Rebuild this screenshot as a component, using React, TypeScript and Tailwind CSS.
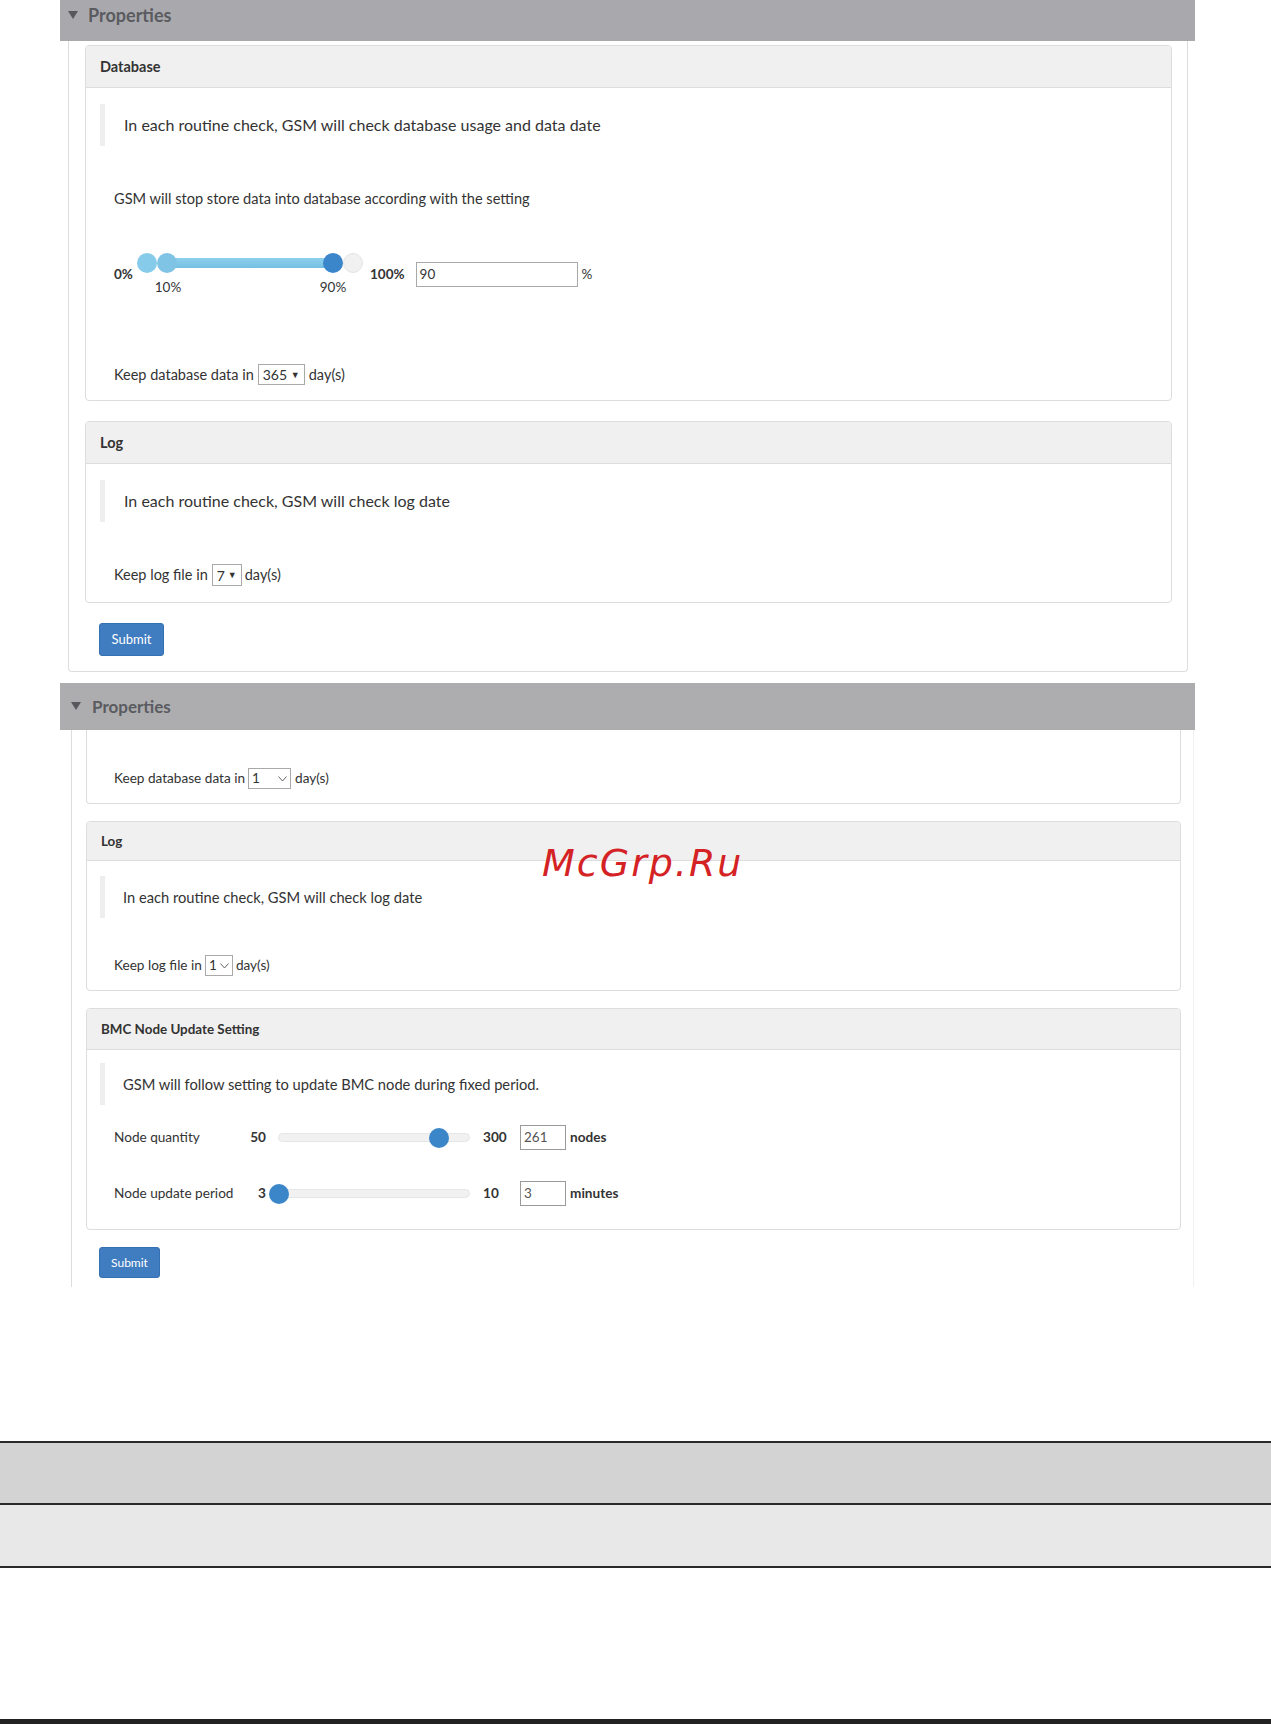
import React from 'react';

function Caret() {
  return (
    <svg width="10" height="9" viewBox="0 0 10 9" className="shrink-0">
      <polygon points="0,0 10,0 5,8" fill="#57585c" />
    </svg>
  );
}

function Chevron() {
  return (
    <svg width="9" height="6" viewBox="0 0 9 6" className="shrink-0">
      <polyline points="0.5,0.5 4.5,5 8.5,0.5" fill="none" stroke="#666" strokeWidth="1" />
    </svg>
  );
}

function PropertiesBar({ tall }: { tall?: boolean }) {
  return (
    <div
      className={
        tall
          ? 'ml-[60px] w-[1135px] h-[47px] bg-[#adadaf] flex items-center pl-[11px] gap-[11px]'
          : 'ml-[60px] w-[1135px] h-[41px] bg-[#a9a9ad] flex items-start pt-[4px] pl-[8px] gap-[10px]'
      }
    >
      <div className={tall ? 'flex items-center' : 'h-[22px] flex items-center'}>
        <Caret />
      </div>
      <span
        className={
          tall
            ? 'text-[17px] leading-[22px] font-bold text-[#5a5b60]'
            : 'text-[18px] leading-[22px] font-bold text-[#5a5b60]'
        }
      >
        Properties
      </span>
    </div>
  );
}

function Quote({ children, small }: { children: React.ReactNode; small?: boolean }) {
  return (
    <div
      className={
        small
          ? 'border-l-[5px] border-[#eeeeee] h-[42px] flex items-center pl-[18px] text-[14.7px] text-[#333]'
          : 'border-l-[5px] border-[#eeeeee] h-[42px] flex items-center pl-[19px] text-[16px] text-[#333]'
      }
    >
      {children}
    </div>
  );
}

function RangeSlider() {
  return (
    <div className="relative w-[226px] h-[25px] ml-[5px]">
      <div className="absolute left-[30px] top-[-4px] w-[166px] h-[10px] bg-gradient-to-b from-[#8ed0ee] to-[#74bfe2]" />
      <div className="absolute left-0 top-[-9px] w-[20px] h-[20px] rounded-full bg-[#86cbea]" />
      <div className="absolute left-[20px] top-[-9px] w-[20px] h-[20px] rounded-full bg-[#7fc4e4]" />
      <div className="absolute left-[186px] top-[-9px] w-[20px] h-[20px] rounded-full bg-[#3b86cb]" />
      <div className="absolute left-[206px] top-[-9px] w-[20px] h-[20px] rounded-full bg-[#f1f1f1] border border-[#e4e4e4]" />
      <span className="absolute left-[31px] top-[17px] -translate-x-1/2 text-[13.5px] leading-[16px] text-[#333]">
        10%
      </span>
      <span className="absolute left-[196px] top-[17px] -translate-x-1/2 text-[13.5px] leading-[16px] text-[#333]">
        90%
      </span>
    </div>
  );
}

function NodeSlider({
  label,
  min,
  max,
  value,
  unit,
}: {
  label: string;
  min: number;
  max: number;
  value: number;
  unit: string;
}) {
  const pct = ((value - min) / (max - min)) * 100;
  return (
    <div className="flex items-center h-[25px] text-[13.6px] text-[#333]">
      <span className="w-[126px]">{label}</span>
      <span className="w-[28px] pr-[2px] text-right font-bold">{min}</span>
      <div className="relative ml-[10px] w-[192px] h-[9px] rounded-full bg-[#f1f1f1] border border-[#e6e6e6]">
        <div
          className="absolute top-1/2 w-[20px] h-[20px] -translate-x-1/2 -translate-y-1/2 rounded-full bg-[#3b86c8]"
          style={{ left: `${pct}%` }}
        />
      </div>
      <span className="ml-[13px] w-[37px] font-bold">{max}</span>
      <div className="w-[46px] h-[25px] border border-[#9a9a9a] flex items-center pl-[3px] text-[13.5px] text-[#555]">
        {value}
      </div>
      <span className="ml-[4px] font-bold">{unit}</span>
    </div>
  );
}

function Card({
  title,
  headerH,
  children,
  className,
  big,
}: {
  title: string;
  headerH: string;
  children: React.ReactNode;
  className?: string;
  big?: boolean;
}) {
  return (
    <div className={'border border-[#dddddd] rounded-[4px] bg-white ' + (className || '')}>
      <div
        className={
          'bg-[#f1f0f0] border-b border-[#dddddd] rounded-t-[4px] flex items-center px-[14px] font-bold text-[#333] ' +
          (big ? 'text-[14.5px] ' : 'text-[13.4px] ') +
          headerH
        }
      >
        {title}
      </div>
      {children}
    </div>
  );
}

function Band() {
  return (
    <div className="mt-[154px]">
      <div className="h-[2px] bg-[#2a2a2a]" />
      <div className="h-[60px] bg-[#d3d3d3]" />
      <div className="h-[2px] bg-[#2a2a2a]" />
      <div className="h-[61px] bg-[#e8e8e8]" />
      <div className="h-[2px] bg-[#2a2a2a]" />
    </div>
  );
}

export default function App() {
  return (
    <div className="relative w-[1271px] h-[1724px] bg-white font-['Lato',sans-serif] text-[#333] overflow-hidden">
      {/* first properties panel */}
      <PropertiesBar />
      <div className="ml-[68px] w-[1120px] border-x border-b border-[#dddddd] rounded-b-[4px] pl-[16px] pr-[15px] pt-[4px] pb-[15px]">
        <Card title="Database" headerH="h-[42px]" big>
          <div className="px-[14px] pt-[16px] pb-[15px]">
            <Quote>In each routine check, GSM will check database usage and data date</Quote>
            <div className="ml-[14px] mt-[43px] h-[20px] flex items-center text-[14.6px]">
              GSM will stop store data into database according with the setting
            </div>
            <div className="ml-[14px] mt-[53px] flex items-center h-[25px] text-[13.5px]">
              <span className="font-bold w-[18px]">0%</span>
              <RangeSlider />
              <span className="ml-[7px] font-bold">100%</span>
              <div className="ml-[11px] w-[162px] h-[25px] border border-[#a9a9a9] flex items-center pl-[3px] text-[13.5px]">
                90
              </div>
              <span className="ml-[4px]">%</span>
            </div>
            <div className="ml-[14px] mt-[77px] flex items-center h-[21px] text-[14.5px]">
              <span>Keep database data in</span>
              <div className="ml-[4px] w-[47px] h-[21px] border border-[#a9a9a9] flex items-center justify-between px-[4px] text-[14px]">
                <span>365</span>
                <span className="text-[9px]">▼</span>
              </div>
              <span className="ml-[4px]">day(s)</span>
            </div>
          </div>
        </Card>
        <Card title="Log" headerH="h-[42px]" className="mt-[20px]" big>
          <div className="px-[14px] pt-[16px] pb-[16px]">
            <Quote>In each routine check, GSM will check log date</Quote>
            <div className="ml-[14px] mt-[42px] flex items-center h-[22px] text-[14.5px]">
              <span>Keep log file in</span>
              <div className="ml-[4px] w-[30px] h-[22px] border border-[#a9a9a9] flex items-center justify-between px-[4px] text-[14px]">
                <span>7</span>
                <span className="text-[9px]">▼</span>
              </div>
              <span className="ml-[3px]">day(s)</span>
            </div>
          </div>
        </Card>
        <button className="ml-[14px] mt-[20px] w-[65px] h-[33px] rounded-[3px] bg-[#3f7cc0] border border-[#3570b2] text-white text-[13px]">
          Submit
        </button>
      </div>

      {/* second properties panel */}
      <div className="mt-[11px]">
        <PropertiesBar tall />
      </div>
      <div className="ml-[71px] w-[1123px] border-l border-[#dddddd] border-r border-r-[#f0f0f0] pl-[14px] pr-[12px] pb-[9px]">
        <div className="border-x border-b border-[#dddddd] rounded-b-[4px] px-[13px] pt-[38px] pb-[14px]">
          <div className="ml-[14px] flex items-center h-[21px] text-[13.6px]">
            <span>Keep database data in</span>
            <div className="ml-[3px] w-[43px] h-[21px] border border-[#a9a9a9] flex items-center justify-between pl-[3px] pr-[3px] text-[13.5px]">
              <span>1</span>
              <Chevron />
            </div>
            <span className="ml-[4px]">day(s)</span>
          </div>
        </div>
        <Card title="Log" headerH="h-[39px]" className="mt-[17px]">
          <div className="px-[13px] pt-[15px] pb-[14px]">
            <Quote small>In each routine check, GSM will check log date</Quote>
            <div className="ml-[14px] mt-[37px] flex items-center h-[21px] text-[13.6px]">
              <span>Keep log file in</span>
              <div className="ml-[3px] w-[28px] h-[21px] border border-[#a9a9a9] flex items-center justify-between pl-[3px] pr-[3px] text-[13.5px]">
                <span>1</span>
                <Chevron />
              </div>
              <span className="ml-[3px]">day(s)</span>
            </div>
          </div>
        </Card>
        <Card title="BMC Node Update Setting" headerH="h-[41px]" className="mt-[17px]">
          <div className="px-[13px] pt-[13px] pb-[23px]">
            <Quote small>GSM will follow setting to update BMC node during fixed period.</Quote>
            <div className="ml-[14px] mt-[20px]">
              <NodeSlider label="Node quantity" min={50} max={300} value={261} unit="nodes" />
            </div>
            <div className="ml-[14px] mt-[31px]">
              <NodeSlider label="Node update period" min={3} max={10} value={3} unit="minutes" />
            </div>
          </div>
        </Card>
        <button className="ml-[13px] mt-[17px] w-[61px] h-[31px] rounded-[3px] bg-[#3f7cc0] border border-[#3570b2] text-white text-[12px]">
          Submit
        </button>
      </div>

      <Band />
      <div className="absolute left-0 right-0 bottom-0 h-[5px] bg-[#222]" />

      {/* watermark over the page */}
      <div className="absolute left-[542px] top-[840px] font-['DejaVu_Sans',sans-serif] italic text-[38px] leading-[46px] tracking-[2px] text-[#d42225]">
        McGrp.Ru
      </div>
    </div>
  );
}
